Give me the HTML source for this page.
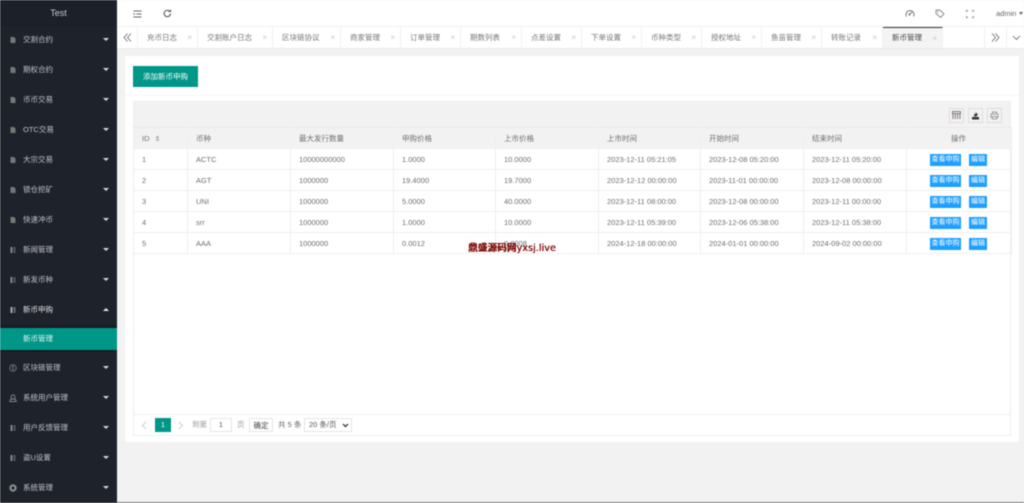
<!DOCTYPE html>
<html lang="zh"><head><meta charset="utf-8"><title>新币管理</title>
<style>
*{box-sizing:border-box}
html,body{margin:0;padding:0;width:1024px;height:503px;overflow:hidden;background:#f2f2f2}
body{font-family:"Liberation Sans","Noto Sans CJK SC",sans-serif;font-size:7.5px;color:#666}
#w{position:relative;width:1024px;height:503px;overflow:hidden;filter:blur(.4px)}
.a{position:absolute;white-space:nowrap}
#side{position:absolute;left:0;top:0;width:117px;height:503px;background:#1e222b}
.m{position:absolute;left:23px;color:rgba(255,255,255,.72);line-height:12px;height:12px;font-size:7.5px;white-space:nowrap}
.car{position:absolute;left:103px;width:0;height:0;border-left:3px solid transparent;border-right:3px solid transparent;border-top:3px solid #d6d7d9}
.car.up{border-top:0;border-bottom:3px solid #e6e6e6}
.ic{position:absolute;left:9px;width:8px;height:8px}
.t{position:absolute;top:27px;height:21px;border-right:1px solid #f0f0f0;line-height:21px;padding-left:9px;white-space:nowrap;color:#777;font-size:7.5px}
.t i{position:absolute;right:5px;top:0;font-style:normal;color:#c8c8c8;font-size:8px;line-height:21px;font-family:"Liberation Sans",sans-serif}
table{position:absolute;left:133px;top:127px;width:878px;border-collapse:collapse;table-layout:fixed}
td,th{height:21px;padding:0 0 0 8px;font-weight:400;text-align:left;font-size:7.5px;color:#6e6e6e;border:1px solid #eee;white-space:nowrap;overflow:hidden}
th{background:#f2f2f2}
tr:first-child th{border-top-color:#e9e9e9}
.c,th.c{text-align:center;padding:0 1px 0 0}
.b{display:inline-block;height:12px;line-height:12px;background:#1e9fff;color:#fff;font-size:7px;vertical-align:middle;position:relative;top:1px}
.b1{width:31px;margin-right:8px}
.b2{width:18px}
.tb{position:absolute;top:108px;width:15px;height:15px;border:1px solid #dcdcdc}
</style></head><body><div id="w">

<div id="side">
<div class="a" style="left:0;top:0;width:117px;height:26px;background:#1c2028;text-align:center;line-height:26px;color:#c9cacc;font-size:9px">Test</div>
<svg class="ic" style="top:36px" viewBox="0 0 8 8"><path d="M1.5 1h3.5l1.5 1.5V7h-5z" fill="#777"/></svg><div class="m" style="top:34px">交割合约</div><div class="car" style="top:38px"></div>
<svg class="ic" style="top:66px" viewBox="0 0 8 8"><path d="M1.5 1h3.5l1.5 1.5V7h-5z" fill="#777"/></svg><div class="m" style="top:64px">期权合约</div><div class="car" style="top:68px"></div>
<svg class="ic" style="top:96px" viewBox="0 0 8 8"><path d="M1.5 1h3.5l1.5 1.5V7h-5z" fill="#777"/></svg><div class="m" style="top:94px">币币交易</div><div class="car" style="top:98px"></div>
<svg class="ic" style="top:126px" viewBox="0 0 8 8"><path d="M1.5 1h3.5l1.5 1.5V7h-5z" fill="#777"/></svg><div class="m" style="top:124px">OTC交易</div><div class="car" style="top:128px"></div>
<svg class="ic" style="top:156px" viewBox="0 0 8 8"><path d="M1.5 1h3.5l1.5 1.5V7h-5z" fill="#777"/></svg><div class="m" style="top:154px">大宗交易</div><div class="car" style="top:158px"></div>
<svg class="ic" style="top:186px" viewBox="0 0 8 8"><path d="M1.5 1h3.5l1.5 1.5V7h-5z" fill="#777"/></svg><div class="m" style="top:184px">锁仓挖矿</div><div class="car" style="top:188px"></div>
<svg class="ic" style="top:216px" viewBox="0 0 8 8"><path d="M1.5 1h3.5l1.5 1.5V7h-5z" fill="#777"/></svg><div class="m" style="top:214px">快速冲币</div><div class="car" style="top:218px"></div>
<svg class="ic" style="top:246px" viewBox="0 0 8 8"><path d="M1.5 1h2v6h-2zM4.5 1.5h2v1h-2zM4.5 3.5h2v1h-2zM4.5 5.5h2v1h-2z" fill="#888"/></svg><div class="m" style="top:244px">新闻管理</div><div class="car" style="top:248px"></div>
<svg class="ic" style="top:276px" viewBox="0 0 8 8"><path d="M1.5 1h2v6h-2zM4.5 1.5h2v1h-2zM4.5 3.5h2v1h-2zM4.5 5.5h2v1h-2z" fill="#888"/></svg><div class="m" style="top:274px">新发币种</div><div class="car" style="top:278px"></div>
<svg class="ic" style="top:306px" viewBox="0 0 8 8"><path d="M1.5 1h2v6h-2zM4.5 1.5h2v1h-2zM4.5 3.5h2v1h-2zM4.5 5.5h2v1h-2z" fill="#aaa"/></svg><div class="m" style="top:304px;color:#e4e4e5">新币申购</div><div class="car up" style="top:308px"></div>
<div class="a" style="left:0;top:325px;width:117px;height:3px;background:#181b22"></div>
<div class="a" style="left:0;top:328px;width:117px;height:22px;background:#009688;color:#e6f4f3;line-height:22px;padding-left:23px">新币管理</div>
<div class="a" style="left:0;top:350px;width:117px;height:2px;background:#171a20"></div>
<svg class="ic" style="top:364px" viewBox="0 0 8 8"><circle cx="4" cy="4" r="3.2" fill="none" stroke="#888" stroke-width=".8"/><path d="M4 1.8v4.4" stroke="#888" stroke-width=".9"/></svg><div class="m" style="top:362px">区块链管理</div><div class="car" style="top:366px"></div>
<svg class="ic" style="top:394px" viewBox="0 0 8 8"><circle cx="4" cy="3" r="2" fill="none" stroke="#888" stroke-width=".9"/><path d="M.8 7.5C1 5.6 2 5 3 5h2c1 0 2 .6 2.2 2.5z" fill="none" stroke="#888" stroke-width=".9"/></svg><div class="m" style="top:392px">系统用户管理</div><div class="car" style="top:396px"></div>
<svg class="ic" style="top:424px" viewBox="0 0 8 8"><path d="M1.5 1h2v6h-2zM4.5 1.5h2v1h-2zM4.5 3.5h2v1h-2zM4.5 5.5h2v1h-2z" fill="#888"/></svg><div class="m" style="top:422px">用户反馈管理</div><div class="car" style="top:426px"></div>
<svg class="ic" style="top:454px" viewBox="0 0 8 8"><path d="M1.5 1h2v6h-2zM4.5 1.5h2v1h-2zM4.5 3.5h2v1h-2zM4.5 5.5h2v1h-2z" fill="#888"/></svg><div class="m" style="top:452px">盗U设置</div><div class="car" style="top:456px"></div>
<svg class="ic" style="top:484px" viewBox="0 0 8 8"><circle cx="4" cy="4" r="2.4" fill="none" stroke="#999" stroke-width="1.6"/><circle cx="4" cy="4" r="3.5" fill="none" stroke="#999" stroke-width=".8" stroke-dasharray="1 1"/></svg><div class="m" style="top:482px">系统管理</div><div class="car" style="top:486px"></div>
</div>

<div class="a" style="left:117px;top:0;width:907px;height:27px;background:#fff;border-bottom:1px solid #f2f2f2"></div>
<svg class="a" style="left:133px;top:10px" width="9" height="8" viewBox="0 0 9 8"><path d="M.5 1h8M3.5 4h5M.5 7h8" stroke="#666" stroke-width="1"/><path d="M.5 3l2 1-2 1z" fill="#666"/></svg>
<svg class="a" style="left:163px;top:9px" width="9" height="9" viewBox="0 0 9 9"><path d="M7.5 4.5a3.2 3.2 0 1 1-1-2.3" fill="none" stroke="#555" stroke-width="1.1"/><path d="M5.3 3h2.8V.3z" fill="#555"/></svg>
<svg class="a" style="left:905px;top:9px" width="10" height="9" viewBox="0 0 10 9"><path d="M1.5 7.5a4 4 0 1 1 7 0" fill="none" stroke="#777" stroke-width="1"/><path d="M4.5 5.500L7 3" stroke="#777" stroke-width="1"/><circle cx="4.500" cy="5.500" r="1.100" fill="#777"/></svg>
<svg class="a" style="left:935px;top:9px" width="10" height="10" viewBox="0 0 10 10"><path d="M1 1h4l4 4-3.500 3.500-4.500-4z" fill="none" stroke="#888" stroke-width=".9"/><circle cx="3" cy="3" r=".7" fill="#888"/></svg>
<svg class="a" style="left:966px;top:10px" width="8" height="8" viewBox="0 0 8 8"><path d="M.5 2v-1.500h1.500M6 .5h1.500V2M7.500 6v1.500H6M2 7.500H.5V6" fill="none" stroke="#888" stroke-width=".9"/></svg>
<div class="a" style="left:996px;top:8px;line-height:11px;font-size:7.5px;color:#666">admin</div>
<div class="a" style="left:1019px;top:12px;width:0;height:0;border-left:2.500px solid transparent;border-right:2.500px solid transparent;border-top:3px solid #666"></div>

<div class="a" style="left:117px;top:27px;width:907px;height:22px;background:#fff;border-bottom:1px solid #e9e9e9"></div>
<div class="a" style="left:117px;top:27px;width:21px;height:21px;border-right:1px solid #f0f0f0"></div>
<svg class="a" style="left:123px;top:33px" width="9" height="9" viewBox="0 0 9 9"><path d="M4.500.5L1 4.500l3.500 4M8 .5L4.500 4.500 8 8.500" fill="none" stroke="#666" stroke-width=".8"/></svg>
<div class="t" style="left:138px;width:60px">充币日志<i>×</i></div>
<div class="t" style="left:198px;width:75px">交割账户日志<i>×</i></div>
<div class="t" style="left:273px;width:68px">区块链协议<i>×</i></div>
<div class="t" style="left:341px;width:60px">商家管理<i>×</i></div>
<div class="t" style="left:401px;width:60px">订单管理<i>×</i></div>
<div class="t" style="left:461px;width:61px">期数列表<i>×</i></div>
<div class="t" style="left:522px;width:60px">点差设置<i>×</i></div>
<div class="t" style="left:582px;width:60px">下单设置<i>×</i></div>
<div class="t" style="left:642px;width:60px">币种类型<i>×</i></div>
<div class="t" style="left:702px;width:60px">授权地址<i>×</i></div>
<div class="t" style="left:762px;width:60px">鱼苗管理<i>×</i></div>
<div class="t" style="left:822px;width:61px">转账记录<i>×</i></div>
<div class="t" style="left:883px;width:60px;background:#f4f4f4;color:#444;border-top:1px solid #333;line-height:20px">新币管理<i>×</i></div>
<div class="a" style="left:984px;top:27px;width:1px;height:21px;background:#f0f0f0"></div>
<div class="a" style="left:1006px;top:27px;width:1px;height:21px;background:#f0f0f0"></div>
<svg class="a" style="left:991px;top:33px" width="9" height="9" viewBox="0 0 9 9"><path d="M1 .5l3.500 4-3.500 4M4.500.5L8 4.500l-3.500 4" fill="none" stroke="#666" stroke-width=".8"/></svg>
<svg class="a" style="left:1012px;top:35px" width="9" height="6" viewBox="0 0 9 6"><path d="M1 1l3.500 3.500L8 1" fill="none" stroke="#666" stroke-width=".8"/></svg>

<div class="a" style="left:125px;top:56px;width:894px;height:386px;background:#fff"></div>
<div class="a" style="left:125px;top:95px;width:894px;height:1px;background:#f6f6f6"></div>
<div class="a" style="left:133px;top:66px;width:65px;height:21px;background:#009688;color:#fff;text-align:center;line-height:21px;font-size:7.5px">添加新币申购</div>

<div class="a" style="left:133px;top:101px;width:878px;height:335px;border:1px solid #eee"></div>
<div class="a" style="left:133px;top:101px;width:878px;height:27px;background:#f2f2f2;border:1px solid #eee"></div>
<div class="tb" style="left:949px"></div>
<svg class="a" style="left:952px;top:111px" width="9" height="9" viewBox="0 0 9 9"><path d="M.5.500h8v2h-8zM1 3v5M3.300 3v5M5.700 3v5M8 3v5" fill="none" stroke="#6a5a66" stroke-width=".8"/></svg>
<div class="tb" style="left:968px"></div>
<svg class="a" style="left:971px;top:111px" width="9" height="9" viewBox="0 0 9 9"><path d="M1 6h7v2.500H1z" fill="#333"/><path d="M3 5.500V3h1.500V1L7 3.500 5.500 5.500z" fill="#444"/></svg>
<div class="tb" style="left:987px"></div>
<svg class="a" style="left:990px;top:111px" width="9" height="9" viewBox="0 0 9 9"><path d="M2.500 3V1h4v2M2.500 6.500H1V3h7v3.500H6.500M2.500 5.500h4V8h-4z" fill="none" stroke="#888" stroke-width=".8"/></svg>

<table>
<colgroup><col style="width:54px"><col style="width:103px"><col style="width:103px"><col style="width:102px"><col style="width:103px"><col style="width:102px"><col style="width:103px"><col style="width:103px"><col style="width:105px"></colgroup>
<tr><th>ID<svg width="5" height="7" viewBox="0 0 5 7" style="margin-left:5px;vertical-align:-1px"><path d="M2.500.5L4.500 3h-4zM2.500 6.500L.5 4h4z" fill="#aaa"/></svg></th><th>币种</th><th>最大发行数量</th><th>申购价格</th><th>上市价格</th><th>上市时间</th><th>开始时间</th><th>结束时间</th><th class="c">操作</th></tr>
<tr><td>1</td><td>ACTC</td><td>10000000000</td><td>1.0000</td><td>10.0000</td><td>2023-12-11 05:21:05</td><td>2023-12-08 05:20:00</td><td>2023-12-11 05:20:00</td><td class="c"><span class="b b1">查看申购</span><span class="b b2">编辑</span></td></tr>
<tr><td>2</td><td>AGT</td><td>1000000</td><td>19.4000</td><td>19.7000</td><td>2023-12-12 00:00:00</td><td>2023-11-01 00:00:00</td><td>2023-12-08 00:00:00</td><td class="c"><span class="b b1">查看申购</span><span class="b b2">编辑</span></td></tr>
<tr><td>3</td><td>UNI</td><td>1000000</td><td>5.0000</td><td>40.0000</td><td>2023-12-11 08:00:00</td><td>2023-12-08 00:00:00</td><td>2023-12-11 00:00:00</td><td class="c"><span class="b b1">查看申购</span><span class="b b2">编辑</span></td></tr>
<tr><td>4</td><td>srr</td><td>1000000</td><td>1.0000</td><td>10.0000</td><td>2023-12-11 05:39:00</td><td>2023-12-06 05:38:00</td><td>2023-12-11 05:38:00</td><td class="c"><span class="b b1">查看申购</span><span class="b b2">编辑</span></td></tr>
<tr><td>5</td><td>AAA</td><td>1000000</td><td>0.0012</td><td>0.0008</td><td>2024-12-18 00:00:00</td><td>2024-01-01 00:00:00</td><td>2024-09-02 00:00:00</td><td class="c"><span class="b b1">查看申购</span><span class="b b2">编辑</span></td></tr>
</table>

<div class="a" style="left:468px;top:243px;line-height:12px;font-size:9.700px;color:#7c0606;font-family:'DejaVu Sans','Noto Sans CJK SC',sans-serif;font-weight:700;text-shadow:.3px 0 #7c0606">鼎盛源码网<span style="font-weight:400">yxsj.live</span></div>

<div class="a" style="left:134px;top:414px;width:876px;height:1px;background:#eee"></div>
<svg class="a" style="left:141px;top:421px" width="6" height="9" viewBox="0 0 6 9"><path d="M5 1L1.500 4.500 5 8" fill="none" stroke="#ccc" stroke-width=".9"/></svg>
<div class="a" style="left:155px;top:418px;width:16px;height:14px;background:#009688;color:#fff;text-align:center;line-height:14px;font-size:7.5px">1</div>
<svg class="a" style="left:178px;top:421px" width="6" height="9" viewBox="0 0 6 9"><path d="M1 1l3.500 3.500L1 8" fill="none" stroke="#ccc" stroke-width=".9"/></svg>
<div class="a" style="left:192px;top:418px;line-height:14px;color:#999">到第</div>
<div class="a" style="left:210px;top:418px;width:22px;height:14px;border:1px solid #e6e6e6;text-align:center;line-height:12px;color:#555;background:#fff">1</div>
<div class="a" style="left:237px;top:418px;line-height:14px;color:#999">页</div>
<div class="a" style="left:249px;top:418px;width:24px;height:14px;border:1px solid #e6e6e6;text-align:center;line-height:13px;color:#444;background:#fff">确定</div>
<div class="a" style="left:278px;top:418px;line-height:14px;color:#666">共 5 条</div>
<div class="a" style="left:304px;top:418px;width:48px;height:14px;border:1px solid #e6e6e6;line-height:12px;padding-left:4px;color:#555;background:#fff">20 条/页</div>
<svg class="a" style="left:342px;top:423px" width="7" height="5" viewBox="0 0 7 5"><path d="M1 1l2.500 2.500L6 1" fill="none" stroke="#222" stroke-width="1.200"/></svg>

<div class="a" style="left:117px;top:502px;width:907px;height:1px;background:#777"></div>
</div></body></html>
